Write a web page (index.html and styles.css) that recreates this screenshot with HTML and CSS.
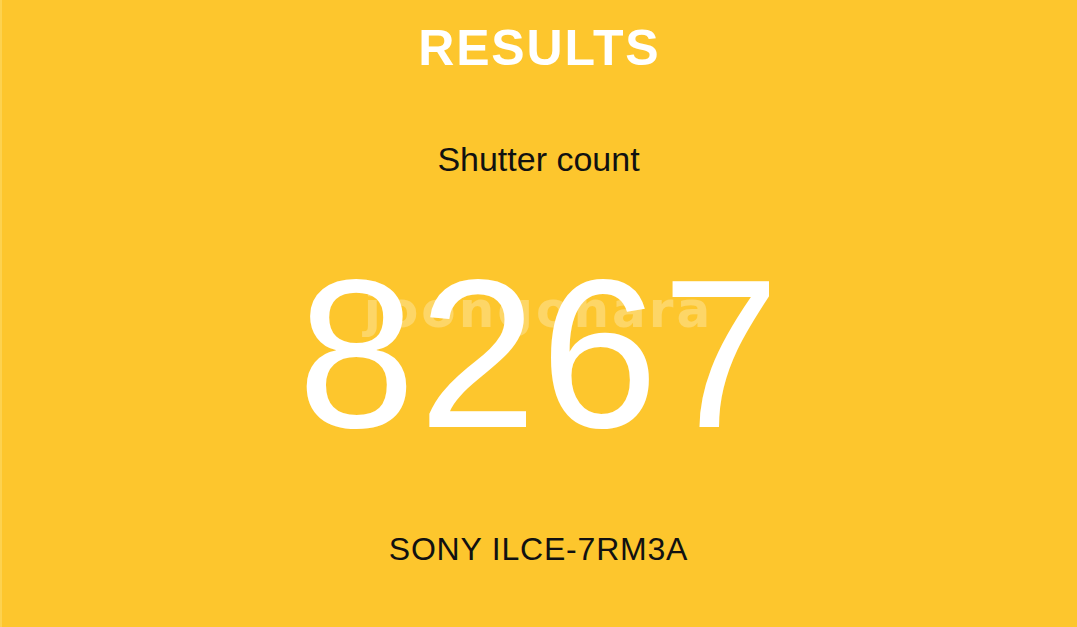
FILE: index.html
```html
<!DOCTYPE html>
<html lang="en">
<head>
<meta charset="utf-8">
<title>Results</title>
<link rel="stylesheet" href="styles.css">
</head>
<body>
<main class="screen">
  <h1 class="title">RESULTS</h1>
  <p class="label">Shutter count</p>
  <div class="count-wrap">
    <div class="count">8267</div>
    <div class="watermark">joongonara</div>
  </div>
  <p class="model">SONY ILCE-7RM3A</p>
</main>
</body>
</html>
```
FILE: styles.css
```css
html, body {
  margin: 0;
  padding: 0;
  height: 100%;
}
body {
  background: #fdc62d;
  font-family: "Liberation Sans", Arial, Helvetica, sans-serif;
  overflow: hidden;
}
.screen {
  height: 627px;
  box-sizing: border-box;
  display: flex;
  flex-direction: column;
  align-items: center;
  padding-top: 23px;
  box-shadow: inset 2px 0 0 #fdd24f;
}
.title {
  margin: 0;
  font-size: 50px;
  line-height: 1;
  font-weight: 700;
  color: #fff;
  letter-spacing: 1.8px;
  margin-right: -1.8px;
}
.label {
  margin: 69px 0 0;
  font-size: 34px;
  line-height: 1;
  color: #111;
}
.count-wrap {
  position: relative;
  margin-top: 72px;
}
.count {
  font-size: 212px;
  line-height: 1;
  color: #fff;
  letter-spacing: 3.5px;
  margin-right: -3.5px;
}
.watermark {
  position: absolute;
  left: 50%;
  top: 37px;
  transform: translateX(-50%);
  font-family: "DejaVu Sans", "Noto Sans", sans-serif;
  font-weight: 700;
  font-size: 50px;
  line-height: 1;
  letter-spacing: 3px;
  color: rgba(255, 255, 255, 0.28);
  white-space: nowrap;
  pointer-events: none;
}
.model {
  margin: 73px 0 0;
  font-size: 32px;
  line-height: 1;
  color: #111;
  letter-spacing: 0.8px;
}
```
